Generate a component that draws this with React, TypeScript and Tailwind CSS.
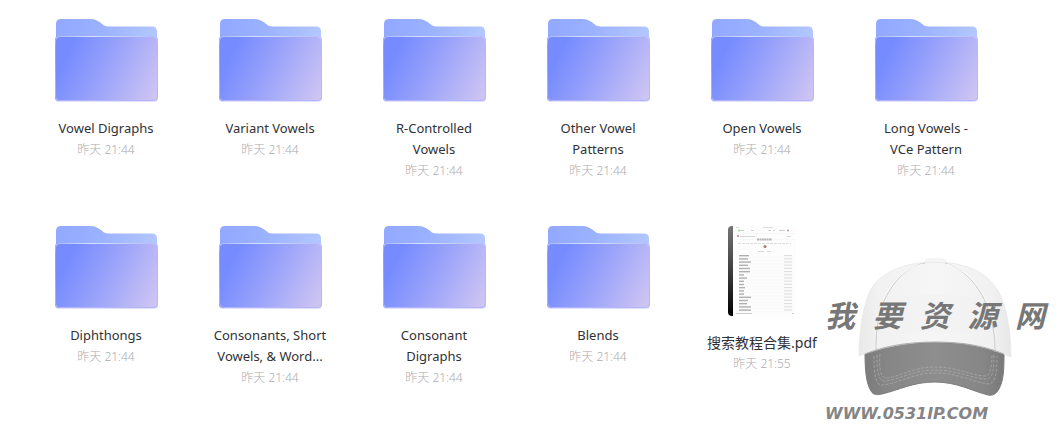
type FileItem = {
  name: string;
  date: string;
  kind: "folder" | "pdf";
};

const files: FileItem[] = [
  { name: "Vowel Digraphs", date: "昨天 21:44", kind: "folder" },
  { name: "Variant Vowels", date: "昨天 21:44", kind: "folder" },
  { name: "R-Controlled Vowels", date: "昨天 21:44", kind: "folder" },
  { name: "Other Vowel Patterns", date: "昨天 21:44", kind: "folder" },
  { name: "Open Vowels", date: "昨天 21:44", kind: "folder" },
  { name: "Long Vowels - VCe\u00a0Pattern", date: "昨天 21:44", kind: "folder" },
  { name: "Diphthongs", date: "昨天 21:44", kind: "folder" },
  { name: "Consonants, Short Vowels, & Word...", date: "昨天 21:44", kind: "folder" },
  { name: "Consonant Digraphs", date: "昨天 21:44", kind: "folder" },
  { name: "Blends", date: "昨天 21:44", kind: "folder" },
  { name: "搜索教程合集.pdf", date: "昨天 21:55", kind: "pdf" },
];

function FolderIcon() {
  return (
    <svg width="106" height="84" viewBox="0 0 106 84" fill="none" aria-hidden="true">
      <defs>
        <linearGradient id="folder-back" x1="3" y1="2" x2="104" y2="24" gradientUnits="userSpaceOnUse">
          <stop offset="0" stopColor="#91a8ff" />
          <stop offset="0.45" stopColor="#9bb2ff" />
          <stop offset="1" stopColor="#b4c8ff" />
        </linearGradient>
        <linearGradient id="folder-front" x1="12" y1="40" x2="100" y2="84" gradientUnits="userSpaceOnUse">
          <stop offset="0" stopColor="#758bff" />
          <stop offset="0.5" stopColor="#a0a7f9" />
          <stop offset="1" stopColor="#cfc5f3" />
        </linearGradient>
        <linearGradient id="folder-edge" x1="2" y1="19" x2="2" y2="83" gradientUnits="userSpaceOnUse">
          <stop offset="0" stopColor="#c5ceff" />
          <stop offset="0.15" stopColor="#a9b3ff" stopOpacity="0.5" />
          <stop offset="1" stopColor="#b3b4fa" />
        </linearGradient>
        <linearGradient id="folder-shine" x1="2" y1="0" x2="105" y2="0" gradientUnits="userSpaceOnUse">
          <stop offset="0" stopColor="#a5b5ff" />
          <stop offset="0.35" stopColor="#d8e0ff" />
          <stop offset="1" stopColor="#b4bcff" />
        </linearGradient>
      </defs>
      <path
        d="M3 30V6Q3 1 8 1H37C42 1 45 3 48 5L51 7.500Q53 8.500 56 8.500H99Q104 8.500 104 13.500V30Z"
        fill="url(#folder-back)"
      />
      <rect x="2" y="20" width="103" height="64" rx="4" fill="#dfe0fb" />
      <rect x="2" y="18" width="103" height="65" rx="4" fill="url(#folder-front)" />
      <rect x="2.500" y="18.500" width="102" height="64" rx="4" stroke="url(#folder-edge)" />
      <path d="M5 18.500H102" stroke="url(#folder-shine)" />
    </svg>
  );
}

const rowWidths = [10, 9, 12, 9, 11, 11, 5, 8, 5, 5, 6, 5, 5, 12, 9, 8, 12, 12];

function PdfThumbnail() {
  return (
    <svg width="68" height="91" viewBox="0 0 68 91" aria-hidden="true">
      <defs>
        <linearGradient id="pdf-spine" x1="0" y1="0" x2="0" y2="1">
          <stop offset="0" stopColor="#777" />
          <stop offset="0.6" stopColor="#333" />
          <stop offset="1" stopColor="#000" />
        </linearGradient>
        <clipPath id="pdf-clip">
          <rect y="1" width="68" height="90" rx="4" />
        </clipPath>
      </defs>
      <g clipPath="url(#pdf-clip)">
        <rect width="68" height="91" fill="#fdfdfd" />
        <rect width="5" height="91" fill="url(#pdf-spine)" />
        <path d="M35 2.500H45M8 2.500H11" stroke="#ddd" />
        <circle cx="11" cy="5.500" r="1" fill="#8fdf9f" />
        <path d="M12 5.500H16M23 5.500H26M40 5.500H43M45 5.500H47M51 5.500H57" stroke="#d0d0d0" />
        <circle cx="60" cy="5.500" r="1" fill="#b79a9a" />
        <path d="M8 8.500H67M8 14.500H67" stroke="#f7f7f7" />
        <circle cx="10" cy="11" r="1" fill="#b48484" />
        <path d="M12 11.500H27M59 11.500H63" stroke="#d8d8d8" />
        <path d="M29 14.500H44" stroke="#b5b5b5" strokeWidth="2" strokeDasharray="2 .4" />
        <path d="M10 18.500H63" stroke="#dcdcdc" strokeDasharray="3 1" />
        <circle cx="37" cy="21.500" r="1.500" fill="#a47878" />
        <path d="M30 26.500H36M39 26.500H43" stroke="#d8d8d8" />
        {rowWidths.map((width, i) => (
          <g key={i}>
            <rect x="11" y={30 + i * 3.2} width={width} height="1.400" fill="#b0b0b0" />
            <rect x="56" y={30 + i * 3.2} width="8" height="1.200" fill="#e0e0e0" />
            <rect x="8" y={32.3 + i * 3.2} width="58" height=".4" fill="#f4f4f4" />
          </g>
        ))}
        <path d="M8 88.500H24M64 88.500H66" stroke="#ccc" />
      </g>
    </svg>
  );
}

function CapIcon() {
  return (
    <svg className="mx-auto" width="156" height="140" viewBox="36 8 156 140" fill="none" aria-hidden="true">
      <defs>
        <linearGradient id="cap-crown" x1="38" y1="0" x2="190" y2="0" gradientUnits="userSpaceOnUse">
          <stop offset="0" stopColor="#e9e9e9" />
          <stop offset="0.12" stopColor="#f1f1f1" />
          <stop offset="0.5" stopColor="#f6f6f6" />
          <stop offset="0.88" stopColor="#f1f1f1" />
          <stop offset="1" stopColor="#e7e7e7" />
        </linearGradient>
        <linearGradient id="cap-brim" x1="44" y1="0" x2="184" y2="0" gradientUnits="userSpaceOnUse">
          <stop offset="0" stopColor="#7b7b7b" />
          <stop offset="0.15" stopColor="#868686" />
          <stop offset="0.5" stopColor="#8e8e8e" />
          <stop offset="0.85" stopColor="#868686" />
          <stop offset="1" stopColor="#787878" />
        </linearGradient>
      </defs>
      <path
        d="M44 103C44 119 45 133 50 141C52 145 56 145 61 144C78 140 92 132 114 132C136 132 151 141 167 145C172 146 175 144 178 139C183 130 183 117 183 103C162 89 66 89 44 103Z"
        fill="url(#cap-brim)"
        stroke="#7c7c7c"
      />
      <path
        d="M38 106C38 82 42 54 50 39C60 22 84 12 114 12C144 12 165 22 176 39C186 55 190 82 190 107C166 96 142 92 114 92C86 92 61 97 38 106Z"
        fill="url(#cap-crown)"
        stroke="#e6e6e6"
        strokeWidth=".7"
      />
      <path d="M66 50Q114 40 162 50L165 87Q114 77 62 87Z" fill="#f2f2f2" opacity=".5" />
      <path d="M104 13C83 17 68 37 61 56C56 72 55 84 55 101" stroke="#cdcdcd" />
      <path d="M124 13C143 18 159 37 166 56C172 73 174 86 174 102" stroke="#cdcdcd" />
      <path d="M102 14C81 18 66 38 59 57M126 14C145 19 161 38 168 57" stroke="#fafafa" />
      <path d="M104 13Q104 9 109 9H120Q125 9 125 13Q114 11 104 13Z" fill="#f6f6f6" stroke="#e6e6e6" strokeWidth=".7" />
      <path d="M44 104C64 96 86 92 114 92C142 92 164 96 183 104" stroke="#999" strokeWidth=".7" />
      <g stroke="#a9a9a9" strokeWidth=".8" strokeDasharray="3 1.500">
        <path d="M59 104C58 116 59 128 65 128C79 127 91 117 114 117C137 117 151 126 165 126C169 125 171 117 171 104" />
        <path d="M56 105C56 119 57 131 63 131C78 130 92 120 114 120C136 120 152 129 166 129C172 128 173 119 173 105" />
        <path d="M53 106C53 122 54 134 60 135C77 134 92 123 114 123C137 123 151 132 168 134C175 133 176 121 176 106" />
      </g>
    </svg>
  );
}

function Watermark() {
  return (
    <div className="pointer-events-none absolute top-[258px] right-4 w-[220px] text-[#777]">
      <CapIcon />
      <div className="absolute inset-x-0 top-9 flex justify-between font-['Noto_Sans_CJK_SC',sans-serif] text-[30px] leading-10 font-bold italic">
        <span>我</span>
        <span>要</span>
        <span>资</span>
        <span>源</span>
        <span>网</span>
      </div>
      <p className="mt-2 font-['DejaVu_Sans',sans-serif] text-[16px] leading-4 font-bold whitespace-nowrap text-[#858585] italic">
        WWW.0531IP.COM
      </p>
    </div>
  );
}

export default function App() {
  return (
    <main className="relative min-h-screen bg-white px-6 pt-[18px] font-['Noto_Sans','Noto_Sans_CJK_SC',sans-serif]">
      <ul className="grid auto-rows-[207px] grid-cols-[repeat(auto-fill,164px)]">
        {files.map((file) => (
          <li key={file.name}>
            <a href="#" className="flex flex-col items-center text-center">
              {file.kind === "folder" ? <FolderIcon /> : <PdfThumbnail />}
              <span
                className={`mt-4 w-[118px] leading-[21px] text-[#303136] ${
                  file.kind === "pdf" ? "text-[14px]" : "text-[13px]"
                }`}
              >
                {file.name}
              </span>
              <span className="text-[12px] leading-[21px] font-light text-[#acacb0]">{file.date}</span>
            </a>
          </li>
        ))}
      </ul>
      <Watermark />
    </main>
  );
}
